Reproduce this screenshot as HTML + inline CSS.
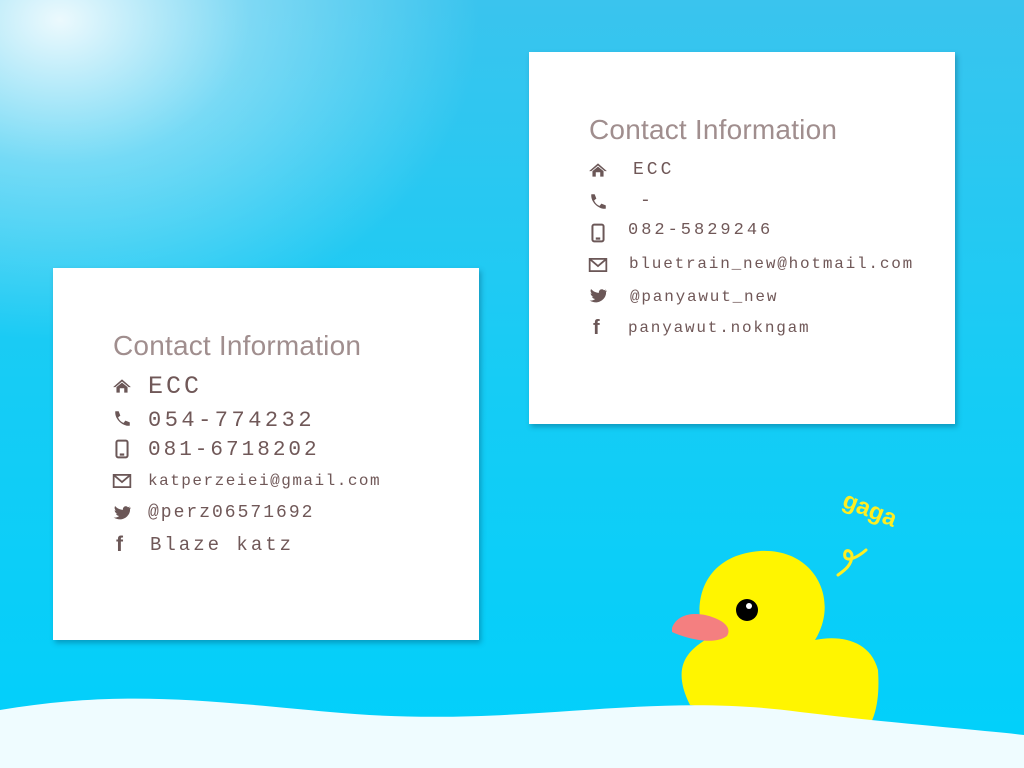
<!DOCTYPE html>
<html><head><meta charset="utf-8"><style>
body{margin:0;width:1024px;height:768px;overflow:hidden;position:relative;font-family:"Liberation Sans",sans-serif;
background:radial-gradient(ellipse 420px 320px at 60px 20px,rgba(255,255,255,.9),rgba(255,255,255,.35) 45%,rgba(255,255,255,0) 100%),linear-gradient(180deg,#3ac4ee 0%,#16ccf5 50%,#00d0fb 100%);}
.card{position:absolute;background:#fff;box-shadow:2px 3px 5px rgba(0,60,90,.35);}
.t{position:absolute;font-size:28px;color:#a08e8e;font-weight:300;letter-spacing:0.2px;white-space:nowrap}
.r{position:absolute;height:20px;line-height:20px;color:#705858;white-space:nowrap;font-family:"Liberation Mono",monospace;}
.i{position:absolute;width:20px;height:20px}
</style></head><body>
<div class="card" style="left:53px;top:268px;width:426px;height:372px"></div>
<div class="card" style="left:529px;top:52px;width:426px;height:372px"></div>

<div class="t" style="left:113px;top:330px">Contact Information</div>
<svg class="i" style="left:112px;top:376px" viewBox="0 0 18 18"><path d="M1 10 9 3 17 10 15 10 9 5 3 10Z M4 10 9 6 14 10 14 15 11 15 11 11 7 11 7 15 4 15Z" fill="#6b5757"/></svg>
<div class="r" style="left:148px;top:377px;font-size:25px;letter-spacing:3px">ECC</div>
<svg class="i" style="left:112px;top:409px" viewBox="0 0 18 18"><path d="M3 2 6 2 7.5 6 5.5 7.5C6.5 10 8 11.5 10.5 12.5L12 10.5 16 12 16 15C10 16 2 9 3 2Z" fill="#6b5757"/></svg>
<div class="r" style="left:148px;top:411px;font-size:22px;letter-spacing:3.5px">054-774232</div>
<svg class="i" style="left:112px;top:439px" viewBox="0 0 18 18"><rect x="4" y="1.5" width="10" height="15" rx="1.5" fill="none" stroke="#6b5757" stroke-width="1.8"/><rect x="7" y="13" width="4" height="2" fill="#6b5757"/></svg>
<div class="r" style="left:148px;top:441px;font-size:21px;letter-spacing:3px">081-6718202</div>
<svg class="i" style="left:112px;top:471px" viewBox="0 0 18 18"><rect x="1.5" y="3.5" width="15" height="11" fill="none" stroke="#6b5757" stroke-width="1.6"/><path d="M2 4 9 10 16 4" fill="none" stroke="#6b5757" stroke-width="1.6"/></svg>
<div class="r" style="left:148px;top:471px;font-size:16px;letter-spacing:1.5px">katperzeiei@gmail.com</div>
<svg class="i" style="left:112px;top:503px" viewBox="0 0 18 18"><path d="M17 4C16 4.5 15.5 4.6 15 4.7 15.6 4.3 16 3.8 16.2 3.1 15.6 3.5 15 3.7 14.3 3.8 12.6 2 9.5 3.3 9.8 6.2 7 6 4.5 4.8 2.8 2.7 1.9 4.2 2.4 6 3.7 6.9 3.2 6.9 2.8 6.7 2.4 6.5 2.4 8 3.5 9.2 4.9 9.5 4.4 9.7 4 9.7 3.5 9.6 3.9 10.8 5 11.7 6.4 11.7 5 12.8 3.3 13.3 1.5 13.1 9.5 18 17 11 16.2 5.3 16.7 4.9 17 4.5 17 4Z" fill="#6b5757"/></svg>
<div class="r" style="left:148px;top:503px;font-size:18px;letter-spacing:2px">@perz06571692</div>
<div class="r" style="left:116px;top:535px;font-size:21px;font-weight:bold;font-family:'Liberation Sans',sans-serif;color:#6b5757">f</div>
<div class="r" style="left:150px;top:535px;font-size:19px;letter-spacing:3px">Blaze  katz</div>

<div class="t" style="left:589px;top:114px">Contact Information</div>
<svg class="i" style="left:588px;top:160px" viewBox="0 0 18 18"><path d="M1 10 9 3 17 10 15 10 9 5 3 10Z M4 10 9 6 14 10 14 15 11 15 11 11 7 11 7 15 4 15Z" fill="#6b5757"/></svg>
<div class="r" style="left:633px;top:160px;font-size:18px;letter-spacing:3px">ECC</div>
<svg class="i" style="left:588px;top:192px" viewBox="0 0 18 18"><path d="M3 2 6 2 7.5 6 5.5 7.5C6.5 10 8 11.5 10.5 12.5L12 10.5 16 12 16 15C10 16 2 9 3 2Z" fill="#6b5757"/></svg>
<div class="r" style="left:640px;top:191px;font-size:18px">-</div>
<svg class="i" style="left:588px;top:223px" viewBox="0 0 18 18"><rect x="4" y="1.5" width="10" height="15" rx="1.5" fill="none" stroke="#6b5757" stroke-width="1.8"/><rect x="7" y="13" width="4" height="2" fill="#6b5757"/></svg>
<div class="r" style="left:628px;top:221px;font-size:17px;letter-spacing:3px">082-5829246</div>
<svg class="i" style="left:588px;top:255px" viewBox="0 0 18 18"><rect x="1.5" y="3.5" width="15" height="11" fill="none" stroke="#6b5757" stroke-width="1.6"/><path d="M2 4 9 10 16 4" fill="none" stroke="#6b5757" stroke-width="1.6"/></svg>
<div class="r" style="left:629px;top:254px;font-size:16px;letter-spacing:1.8px">bluetrain_new@hotmail.com</div>
<svg class="i" style="left:588px;top:286px" viewBox="0 0 18 18"><path d="M17 4C16 4.5 15.5 4.6 15 4.7 15.6 4.3 16 3.8 16.2 3.1 15.6 3.5 15 3.7 14.3 3.8 12.6 2 9.5 3.3 9.8 6.2 7 6 4.5 4.8 2.8 2.7 1.9 4.2 2.4 6 3.7 6.9 3.2 6.9 2.8 6.7 2.4 6.5 2.4 8 3.5 9.2 4.9 9.5 4.4 9.7 4 9.7 3.5 9.6 3.9 10.8 5 11.7 6.4 11.7 5 12.8 3.3 13.3 1.5 13.1 9.5 18 17 11 16.2 5.3 16.7 4.9 17 4.5 17 4Z" fill="#6b5757"/></svg>
<div class="r" style="left:630px;top:287px;font-size:16px;letter-spacing:1.8px">@panyawut_new</div>
<div class="r" style="left:593px;top:318px;font-size:20px;font-weight:bold;font-family:'Liberation Sans',sans-serif;color:#6b5757">f</div>
<div class="r" style="left:628px;top:318px;font-size:16px;letter-spacing:1.8px">panyawut.nokngam</div>

<svg style="position:absolute;left:0;top:0" width="1024" height="768" viewBox="0 0 1024 768">
<path d="M690 705C670 665 690 650 705 640 690 600 705 555 760 551 815 548 840 600 815 640 840 635 870 640 878 670 880 700 875 715 870 725Z" fill="#fff500"/>
<path d="M672 628C678 612 698 612 712 617 724 621 732 628 727 636 715 645 690 640 672 632Z" fill="#f47f80"/>
<circle cx="747" cy="610" r="11" fill="#000"/><circle cx="749" cy="606" r="3" fill="#fff"/>
<text x="838" y="518" transform="rotate(22 870 520)" font-family="Liberation Sans" font-weight="bold" font-size="24" fill="#ffee22">gaga</text>
<path d="M838 575C845 570 852 565 852 555 850 548 843 550 845 557 848 562 858 557 866 550" fill="none" stroke="#ffee22" stroke-width="3" stroke-linecap="round"/>
<path d="M0 710C120 690 200 700 330 712 520 730 640 690 800 712 900 724 980 730 1024 735L1024 768 0 768Z" fill="#effcff"/>
</svg>
</body></html>
